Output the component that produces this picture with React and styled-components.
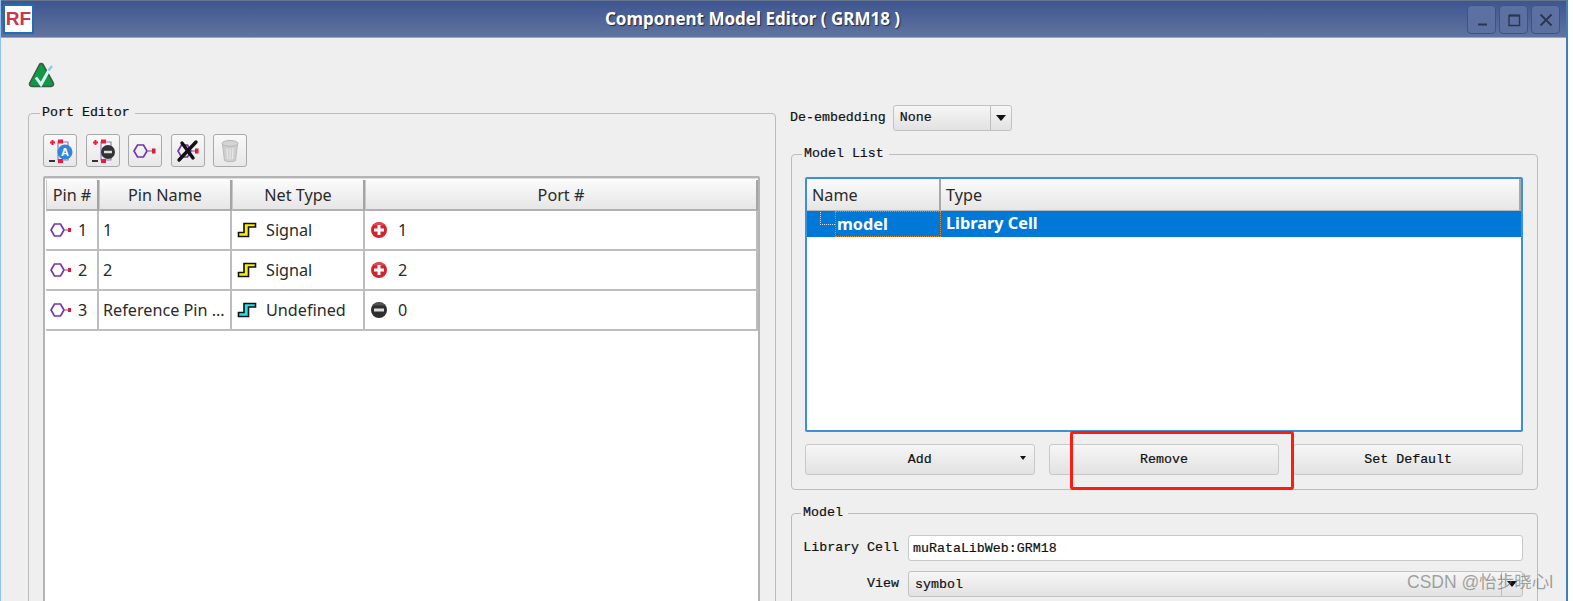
import React from "react";
import styled, { createGlobalStyle } from "styled-components";

const Global = createGlobalStyle`
  html, body { margin: 0; padding: 0; background: #fff; overflow: hidden; }
  * { box-sizing: border-box; }
`;

const mono = `"Liberation Mono", monospace`;
const sans = `"Noto Sans", "Open Sans", sans-serif`;

const Page = styled.div`
  position: relative;
  width: 1573px;
  height: 601px;
  overflow: hidden;
  background: #fff;
`;

const Win = styled.div`
  width: 1568px;
  height: 601px;
  display: flex;
  flex-direction: column;
  background: #efefef;
  border-left: 1px solid #8fc1ee;
  border-right: 2px solid #3f7fb8;
  overflow: hidden;
`;

const TitleBar = styled.div`
  height: 38px;
  flex: none;
  margin-left: -1px;
  margin-right: -2px;
  padding: 4px 8px 0 3px;
  display: flex;
  align-items: flex-start;
  background: linear-gradient(#3e5590, #61749f);
  border-top: 1px solid #66768f;
  border-bottom: 1px solid #9aa6c4;
`;

const Logo = styled.div`
  width: 31px;
  height: 30px;
  flex: none;
  margin-top: -1px;
  background: #fff;
  border: 2px solid #1f6fb0;
  color: #c9354b;
  font: bold 19px/26px "Liberation Sans", sans-serif;
  text-align: center;
`;

const Title = styled.div`
  flex: 1;
  text-align: center;
  color: #fff;
  font: bold 17px/28px ${sans};
  text-shadow: 1px 1px 1px #1d2745;
  padding-left: 4px;
`;

const WinButtons = styled.div`
  display: flex;
  gap: 3px;
`;

const WinButton = styled.div`
  width: 29px;
  height: 29px;
  display: flex;
  align-items: center;
  justify-content: center;
  border: 1px solid #3d5288;
  border-radius: 4px;
  background: #5d70a2;
`;

const Content = styled.div`
  flex: 1;
  min-height: 0;
  padding: 24px 0 0 27px;
`;

const Columns = styled.div`
  display: flex;
  align-items: flex-start;
  margin-top: 15px;
`;

const Group = styled.div`
  border: 1px solid #bcbcbc;
  border-radius: 4px;
`;

const PortGroup = styled(Group)`
  width: 748px;
  height: 520px;
  margin-top: 9px;
  flex: none;
  padding: 0 15px 0 14px;
`;

const Legend = styled.div`
  display: table;
  margin: -9px 0 0 ${(p) => p.$left}px;
  padding: 0 5px 0 2px;
  height: 16px;
  background: #efefef;
  color: #111;
  font: 13.3px/16px ${mono};
  -webkit-text-stroke: 0.2px #111;
`;

const Toolbar = styled.div`
  display: flex;
  gap: 8.5px;
  margin-top: 13px;
`;

const ToolButton = styled.div`
  width: 34px;
  height: 33px;
  display: flex;
  align-items: center;
  justify-content: center;
  border: 1.5px solid #a9a9a9;
  border-radius: 3px;
  background: linear-gradient(#f8f8f8, #e8e8e8);
`;

const TableFrame = styled.div`
  margin-top: 9px;
  height: 440px;
  padding: 2px 0 0 1px;
  background: #fff;
  border: 2px solid #b4b4b4;
  border-radius: 2px 2px 0 0;
  box-shadow: inset 0 1px 0 #ddd;
`;

const Grid = styled.div`
  display: grid;
  grid-template-columns: 53px 133px 133px 1fr;
`;

const HeadCell = styled.div`
  height: 31px;
  display: flex;
  align-items: center;
  justify-content: center;
  background: linear-gradient(#fbfbfb, #e6e6e6);
  border-right: 2px solid #a4a4a4;
  border-left: 1px solid #c8c8c8;
  border-bottom: 2px solid #b0b0b0;
  color: #2a2a2a;
  font: 16.2px ${sans};
`;

const Cell = styled.div`
  height: 40px;
  display: flex;
  align-items: center;
  gap: ${(p) => p.$gap || 0}px;
  padding-left: ${(p) => p.$pad ?? 4}px;
  border-right: 2px solid #bdbdbd;
  border-bottom: 2px solid #bdbdbd;
  color: #2a2a2a;
  font: 16.2px ${sans};
  white-space: nowrap;
`;

const RightCol = styled.div`
  flex: none;
  width: 750px;
  margin-left: 11px;
  display: flex;
  flex-direction: column;
`;

const EmbedRow = styled.div`
  height: 27px;
  display: flex;
  align-items: center;
  gap: 7px;
  margin-left: 3px;
`;

const Label = styled.div`
  color: #111;
  font: 13.3px/16px ${mono};
  -webkit-text-stroke: 0.2px #111;
  width: ${(p) => (p.$w ? `${p.$w}px` : "auto")};
  text-align: ${(p) => (p.$w ? "right" : "left")};
  flex: none;
`;

const Combo = styled.div`
  width: ${(p) => (p.$w ? `${p.$w}px` : "auto")};
  flex: ${(p) => (p.$w ? "none" : "1")};
  height: 26px;
  display: flex;
  align-items: center;
  justify-content: space-between;
  padding-left: 6px;
  border: 1.5px solid #c2c2c2;
  border-radius: 3px;
  background: linear-gradient(#f6f6f6, #e2e2e2);
  color: #111;
  font: 13.3px ${mono};
  -webkit-text-stroke: 0.2px #111;
`;

const ComboArrow = styled.div`
  width: 21px;
  height: 100%;
  display: flex;
  align-items: center;
  justify-content: center;
  border-left: 1px solid #bdbdbd;
`;

const Triangle = styled.div`
  width: 0;
  height: 0;
  border-left: 5px solid transparent;
  border-right: 5px solid transparent;
  border-top: 6px solid #111;
`;

const ListGroup = styled(Group)`
  margin-top: 23px;
  margin-left: 4px;
  width: 747px;
  height: 336px;
  padding: 0 14px 0 13px;
`;

const Tree = styled.div`
  height: 255px;
  margin-top: 15px;
  background: #fff;
  border: 2px solid #3d8fd8;
  border-radius: 2px;
`;

const TreeHead = styled.div`
  display: grid;
  grid-template-columns: 134px 1fr;
`;

const TreeHeadCell = styled.div`
  height: 32px;
  display: flex;
  align-items: center;
  padding-left: 5px;
  background: linear-gradient(#fbfbfb, #e6e6e6);
  border-right: 2px solid #a8a8a8;
  border-bottom: 1px solid #b8b8b8;
  color: #2a2a2a;
  font: 16.2px ${sans};
`;

const TreeRow = styled.div`
  height: 26px;
  display: grid;
  grid-template-columns: 134px 1fr;
  background: #0078d7;
  color: #fff;
  font: bold 16.3px/24px ${sans};
`;

const TreeName = styled.div`
  display: flex;
  align-items: center;
  padding-left: 13px;
`;

const Branch = styled.div`
  width: 15px;
  height: 13px;
  margin-top: -12px;
  flex: none;
  border-left: 1px dotted #cfe4f7;
  border-bottom: 1px dotted #cfe4f7;
`;

const FocusName = styled.div`
  flex: 1;
  height: 100%;
  padding-left: 1px;
  border: 1px dotted #d98a3a;
`;

const TreeType = styled.div`
  padding-left: 5px;
`;

const ButtonRow = styled.div`
  display: flex;
  gap: 14.5px;
  margin-top: 12px;
`;

const PushButton = styled.div`
  position: relative;
  flex: 1;
  height: 31px;
  display: flex;
  align-items: center;
  justify-content: center;
  border: 1.5px solid #c8c8c8;
  border-radius: 3px;
  background: linear-gradient(#f6f6f6, #e2e2e2);
  color: #111;
  font: 13.3px ${mono};
  -webkit-text-stroke: 0.2px #111;
`;

const MenuArrow = styled.div`
  position: absolute;
  right: 8px;
  top: 11px;
  width: 0;
  height: 0;
  border-left: 3.5px solid transparent;
  border-right: 3.5px solid transparent;
  border-top: 4px solid #111;
`;

const ModelGroup = styled(Group)`
  margin-top: 23px;
  margin-left: 4px;
  width: 747px;
  height: 120px;
  padding: 0 14px 0 0;
`;

const FormRow = styled.div`
  display: flex;
  align-items: center;
  gap: 9px;
  margin-top: ${(p) => p.$top}px;
`;

const TextInput = styled.div`
  flex: 1;
  height: 26px;
  display: flex;
  align-items: center;
  padding-left: 4px;
  background: #fff;
  border: 1.5px solid #c8c8c8;
  border-radius: 3px;
  color: #111;
  font: 13.3px ${mono};
  -webkit-text-stroke: 0.2px #111;
`;

const Callout = styled.div`
  position: absolute;
  left: 1070px;
  top: 431px;
  width: 224px;
  height: 59px;
  border: 3px solid #fb1d10;
  border-radius: 3px;
`;

const Watermark = styled.div`
  position: absolute;
  left: 1407px;
  top: 570px;
  color: rgba(105, 105, 105, 0.6);
  font: 17.5px/24px "Liberation Sans", "Noto Sans CJK SC", sans-serif;
  white-space: nowrap;
`;

const Hex = ({ x = 1, y = 1 }) => (
  <path d={`M${x + 3.5} ${y}h6l3.500 6l-3.500 6h-6l-3.500-6z`} fill="none" stroke="#7434ab" strokeWidth="1.7" />
);

const PinIcon = () => (
  <svg width="23" height="14" viewBox="0 0 23 14">
    <Hex x={1} y={1} />
    <path d="M14 7h4" stroke="#8a6aa8" strokeWidth="1.2" />
    <rect x="18" y="5" width="3" height="4" fill="#e0183a" />
  </svg>
);

const StepIcon = ({ color }) => (
  <svg width="20" height="16" viewBox="0 0 20 16">
    <path d="M1.500 10.500H7V1.500H18.500V5H11.500V14.500H1.500z" fill={color} stroke="#111" strokeWidth="1.6" />
  </svg>
);

const PortDot = ({ plus }) => (
  <svg width="18" height="18" viewBox="0 0 18 18">
    <circle cx="9" cy="9" r="8" fill={plus ? "#d8202c" : "#2e2e2e"} />
    <path d="M9 1.500a7.500 7.500 0 0 1 6 3H3a7.500 7.500 0 0 1 6-3z" fill="#fff" opacity="0.18" />
    {plus ? (
      <path d="M4 9h10M9 4v10" stroke="#fff" strokeWidth="3" />
    ) : (
      <path d="M4 9h10" stroke="#ddd" strokeWidth="3" />
    )}
  </svg>
);

const CheckSvg = styled.svg`
  display: block;
`;

const CheckLogo = () => (
  <CheckSvg width="27" height="27" viewBox="0 0 27 27">
    <path
      d="M11.500 2.500a2 2 0 0 1 3.500 0L25 20.500a2.500 2.500 0 0 1-2 4H4a2.500 2.500 0 0 1-2-4z"
      fill="#0f9a46"
      stroke="#3c5a46"
      strokeWidth="1.6"
    />
    <path d="M8 15.500l5 7L21 8" fill="none" stroke="#dff5f5" strokeWidth="3" />
    <path d="M20.500 8.500L24 4" stroke="#8ccbee" strokeWidth="2.4" />
  </CheckSvg>
);

const PortFrame = () => (
  <>
    <path d="M11 4h10v18H11z" fill="none" stroke="#9a7ac4" strokeWidth="1.2" />
    <path d="M3 4.500h5M5.500 2v5" stroke="#ee1c3c" strokeWidth="2" />
    <rect x="11" y="1.500" width="5" height="4" fill="#ee1c3c" />
    <rect x="11" y="21" width="5" height="4" fill="#ee1c3c" />
    <path d="M2 23h6" stroke="#333" strokeWidth="2" />
  </>
);

const AutoPortIcon = () => (
  <svg width="26" height="26" viewBox="0 0 26 26">
    <PortFrame />
    <circle cx="18" cy="14" r="7.500" fill="#2f86d6" />
    <text x="18" y="18" textAnchor="middle" fill="#fff" fontSize="11" fontWeight="bold" fontFamily="Liberation Sans">A</text>
  </svg>
);

const MinusPortIcon = () => (
  <svg width="26" height="26" viewBox="0 0 26 26">
    <PortFrame />
    <circle cx="18" cy="14" r="7" fill="#333" />
    <path d="M14 14h8" stroke="#ddd" strokeWidth="2.500" />
  </svg>
);

const AddPinIcon = () => (
  <svg width="24" height="16" viewBox="0 0 24 16">
    <Hex x={1} y={2} />
    <path d="M14 8h5" stroke="#8a6aa8" strokeWidth="1.2" />
    <rect x="19" y="5.500" width="3.500" height="5" fill="#e0183a" />
  </svg>
);

const DeletePinIcon = () => (
  <svg width="24" height="24" viewBox="0 0 24 24">
    <Hex x={2} y={6} />
    <path d="M15 12h5" stroke="#8a6aa8" strokeWidth="1.2" />
    <rect x="19" y="9.500" width="3.500" height="5" fill="#e0183a" />
    <path d="M3 21L20 3M6 4l11 15" stroke="#111" strokeWidth="3.400" strokeLinecap="round" />
  </svg>
);

const TrashIcon = () => (
  <svg width="20" height="24" viewBox="0 0 20 24">
    <ellipse cx="10" cy="4.500" rx="8" ry="3" fill="#d4d4d4" stroke="#b4b4b4" />
    <path d="M2.500 5.500l2 16a6 2 0 0 0 11 0l2-16a8 3 0 0 1-15 0z" fill="#cfcfcf" stroke="#bbb" />
    <path d="M7 9l.6 11M10 9.500v11M13 9l-.6 11" stroke="#e8e8e8" strokeWidth="1.2" />
  </svg>
);

const ports = [
  { pin: "1", name: "1", type: "Signal", color: "#ffee00", port: "1", plus: true },
  { pin: "2", name: "2", type: "Signal", color: "#ffee00", port: "2", plus: true },
  { pin: "3", name: "Reference Pin ...", type: "Undefined", color: "#18e8ee", port: "0", plus: false },
];

export default function App() {
  return (
    <Page>
      <Global />
      <Win>
        <TitleBar>
          <Logo>RF</Logo>
          <Title>Component Model Editor ( GRM18 )</Title>
          <WinButtons>
            <WinButton>
              <svg width="14" height="14" viewBox="0 0 14 14">
                <path d="M3 11.500h9" stroke="#2b3550" strokeWidth="2" />
              </svg>
            </WinButton>
            <WinButton>
              <svg width="14" height="14" viewBox="0 0 14 14">
                <path d="M2 2.500h10.500V12.500H2z" fill="none" stroke="#2b3550" strokeWidth="1.400" />
                <path d="M2 2.500h10.500" stroke="#2b3550" strokeWidth="2" />
              </svg>
            </WinButton>
            <WinButton>
              <svg width="14" height="14" viewBox="0 0 14 14">
                <path d="M1.500 1.500l11 11M12.500 1.500l-11 11" stroke="#2b3550" strokeWidth="1.800" />
              </svg>
            </WinButton>
          </WinButtons>
        </TitleBar>
        <Content>
          <CheckLogo />
          <Columns>
            <PortGroup>
              <Legend $left={-3}>Port Editor</Legend>
              <Toolbar>
                <ToolButton><AutoPortIcon /></ToolButton>
                <ToolButton><MinusPortIcon /></ToolButton>
                <ToolButton><AddPinIcon /></ToolButton>
                <ToolButton><DeletePinIcon /></ToolButton>
                <ToolButton><TrashIcon /></ToolButton>
              </Toolbar>
              <TableFrame>
                <Grid>
                  <HeadCell>Pin #</HeadCell>
                  <HeadCell>Pin Name</HeadCell>
                  <HeadCell>Net Type</HeadCell>
                  <HeadCell>Port #</HeadCell>
                  {ports.map((p) => (
                    <React.Fragment key={p.pin}>
                      <Cell $pad={4} $gap={5}><PinIcon />{p.pin}</Cell>
                      <Cell>{p.name}</Cell>
                      <Cell $pad={5} $gap={9}><StepIcon color={p.color} />{p.type}</Cell>
                      <Cell $pad={5} $gap={10}><PortDot plus={p.plus} />{p.port}</Cell>
                    </React.Fragment>
                  ))}
                </Grid>
              </TableFrame>
            </PortGroup>
            <RightCol>
              <EmbedRow>
                <Label>De-embedding</Label>
                <Combo $w={119}>
                  None
                  <ComboArrow><Triangle /></ComboArrow>
                </Combo>
              </EmbedRow>
              <ListGroup>
                <Legend $left={-3}>Model List</Legend>
                <Tree>
                  <TreeHead>
                    <TreeHeadCell>Name</TreeHeadCell>
                    <TreeHeadCell>Type</TreeHeadCell>
                  </TreeHead>
                  <TreeRow>
                    <TreeName>
                      <Branch />
                      <FocusName>model</FocusName>
                    </TreeName>
                    <TreeType>Library Cell</TreeType>
                  </TreeRow>
                </Tree>
                <ButtonRow>
                  <PushButton>Add<MenuArrow /></PushButton>
                  <PushButton>Remove</PushButton>
                  <PushButton>Set Default</PushButton>
                </ButtonRow>
              </ListGroup>
              <ModelGroup>
                <Legend $left={9}>Model</Legend>
                <FormRow $top={14}>
                  <Label $w={107}>Library Cell</Label>
                  <TextInput>muRataLibWeb:GRM18</TextInput>
                </FormRow>
                <FormRow $top={10}>
                  <Label $w={107}>View</Label>
                  <Combo>
                    symbol
                    <ComboArrow><Triangle /></ComboArrow>
                  </Combo>
                </FormRow>
              </ModelGroup>
            </RightCol>
          </Columns>
        </Content>
      </Win>
      <Callout />
      <Watermark>CSDN @怡步晓心l</Watermark>
    </Page>
  );
}
